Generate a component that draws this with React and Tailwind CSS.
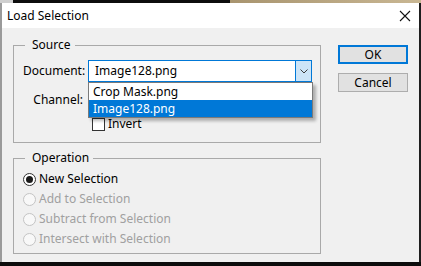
import React from "react";

const Radio = ({ label, checked, disabled }) => (
    <div className="h-[20px] flex items-center">
        <span
            className={
                checked
                    ? "w-[13px] h-[13px] rounded-full border border-[#333] bg-white flex items-center justify-center"
                    : "w-[13px] h-[13px] rounded-full border border-[#c4c4c4] bg-[#f8f8f8]"
            }
        >
            {checked && <span className="w-[7px] h-[7px] rounded-full bg-[#1a1a1a]" />}
        </span>
        <span className={disabled ? "ml-[3px] text-[#a0a0a0]" : "ml-[3px] text-black"}>{label}</span>
    </div>
);

const App = () => {
    return (
        <div className="w-[421px] h-[266px] overflow-hidden flex flex-col bg-[#0c0c0c] text-[12px] leading-[16px] font-['Noto_Sans','Liberation_Sans',sans-serif]">
            {/* backdrop strip above the dialog */}
            <div className="h-[3px] flex">
                <div className="w-[13px] bg-[#cfcfcf]" />
                <div className="w-[217px] bg-[#0d0d0d]" />
                <div className="flex-1 bg-gradient-to-r from-[#a8946f] to-[#c9b793]" />
            </div>

            <div className="h-[259px] flex">
                <div className="w-[2px] bg-[#9a9a9a]" />

                <div className="w-[417px] flex flex-col">
                    {/* title bar */}
                    <div className="h-[25px] bg-white flex items-center justify-between pl-[5px] pr-[8px]">
                        <span className="text-black">Load Selection</span>
                        <svg width="12" height="12" viewBox="0 0 12 12">
                            <path d="M1 1 L11 11 M11 1 L1 11" stroke="#111" strokeWidth="1.1" fill="none" />
                        </svg>
                    </div>

                    {/* dialog body */}
                    <div className="flex-1 bg-[#f0f0f0] flex pl-[11px] pt-[9px] gap-[17px]">
                        <div className="w-[308px] flex flex-col gap-[7px]">
                            {/* Source */}
                            <fieldset className="border border-[#a9a9a9] m-0 pl-[9px] pr-[8px] pb-[10px]">
                                <legend className="ml-[2px] pl-[7px] pr-[4px] text-black">Source</legend>

                                <div className="mt-[7px] flex items-center">
                                    <span className="w-[60px] text-right">Document:</span>
                                    <div className="relative ml-[5px] w-[224px] h-[22px] border border-[#0078d7] bg-white flex">
                                        <span className="flex-1 pl-[6px] flex items-center">Image128.png</span>
                                        <span className="w-[16px] bg-[#cce4f7] border-l border-[#0078d7] flex items-center justify-center">
                                            <svg width="8" height="5" viewBox="0 0 8 5">
                                                <path d="M0.5 0.5 L4 4 L7.5 0.5" stroke="#3c3c3c" strokeWidth="1" fill="none" />
                                            </svg>
                                        </span>

                                        {/* open dropdown list */}
                                        <div className="absolute left-[-1px] top-[21px] w-[225px] border border-[#7a7a7a] bg-white shadow-[3px_3px_3px_rgba(0,0,0,0.28)] z-10">
                                            <div className="h-[17px] pl-[4px] flex items-center text-black">Crop Mask.png</div>
                                            <div className="h-[17px] pl-[4px] flex items-center bg-[#0078d7] text-white">Image128.png</div>
                                        </div>
                                    </div>
                                </div>

                                <div className="mt-[7px] flex items-center">
                                    <span className="w-[60px] text-right">Channel:</span>
                                    <div className="ml-[5px] w-[224px] h-[22px] border border-[#7a7a7a] bg-[#e5e5e5]" />
                                </div>

                                <div className="mt-[5px] ml-[69px] h-[16px] flex items-center">
                                    <span className="w-[13px] h-[13px] border border-[#333] bg-white" />
                                    <span className="ml-[3px]">Invert</span>
                                </div>
                            </fieldset>

                            {/* Operation */}
                            <fieldset className="border border-[#a9a9a9] m-0 pl-[9px] pr-[8px] pb-[4px]">
                                <legend className="ml-[2px] pl-[7px] pr-[4px] text-black">Operation</legend>
                                <div className="mt-[3px] flex flex-col">
                                    <Radio label="New Selection" checked />
                                    <Radio label="Add to Selection" disabled />
                                    <Radio label="Subtract from Selection" disabled />
                                    <Radio label="Intersect with Selection" disabled />
                                </div>
                            </fieldset>
                        </div>

                        {/* buttons */}
                        <div className="mt-[8px] flex flex-col gap-[9px]">
                            <button className="w-[70px] h-[19px] border-2 border-[#0078d7] bg-[#e1e1e1] flex items-center justify-center text-black">
                                OK
                            </button>
                            <button className="w-[70px] h-[19px] border border-[#adadad] bg-[#e1e1e1] flex items-center justify-center text-black">
                                Cancel
                            </button>
                        </div>
                    </div>
                </div>

                <div className="w-[2px] bg-[#1e1e1e]" />
            </div>
        </div>
    );
};

export default App;
